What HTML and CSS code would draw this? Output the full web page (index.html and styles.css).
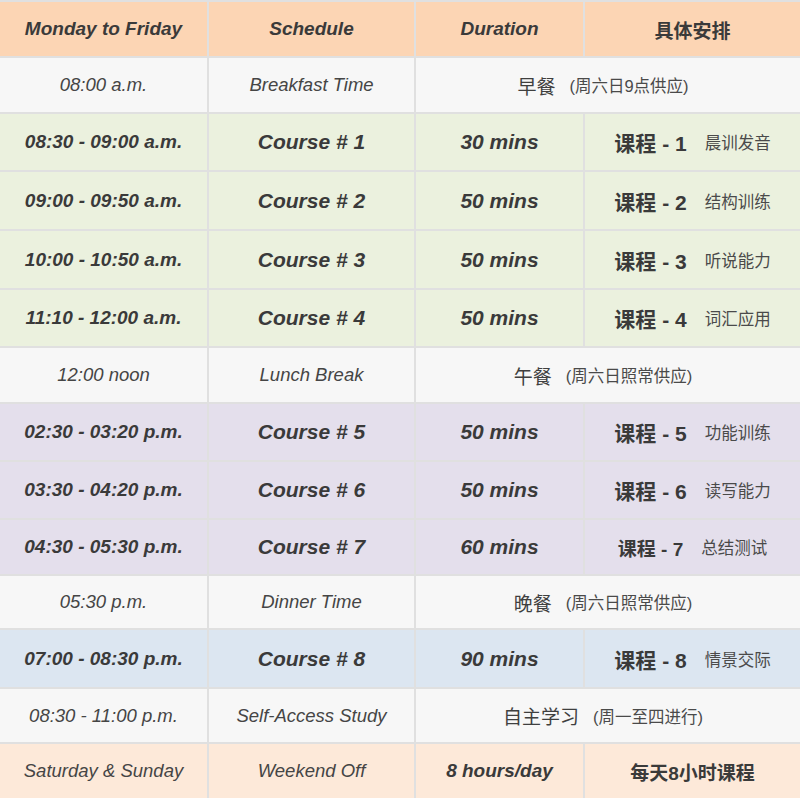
FILE: index.html
```html
<!DOCTYPE html>
<html lang="zh">
<head>
<meta charset="utf-8">
<title>Schedule</title>
<link rel="stylesheet" href="styles.css">
</head>
<body>
<div class="table">
  <div class="row head">
    <div class="c bi">Monday to Friday</div>
    <div class="c bi">Schedule</div>
    <div class="c bi">Duration</div>
    <div class="c cn-b">具体安排</div>
  </div>
  <div class="row meal">
    <div class="c i">08:00 a.m.</div>
    <div class="c i">Breakfast Time</div>
    <div class="c span cn"><span class="cn-main">早餐</span><span class="cn-note">(周六日9点供应)</span></div>
  </div>
  <div class="row green">
    <div class="c time">08:30 - 09:00 a.m.</div>
    <div class="c course">Course # 1</div>
    <div class="c course">30 mins</div>
    <div class="c cn"><span class="cn-course">课程 - 1</span><span class="cn-small">晨训发音</span></div>
  </div>
  <div class="row green">
    <div class="c time">09:00 - 09:50 a.m.</div>
    <div class="c course">Course # 2</div>
    <div class="c course">50 mins</div>
    <div class="c cn"><span class="cn-course">课程 - 2</span><span class="cn-small">结构训练</span></div>
  </div>
  <div class="row green">
    <div class="c time">10:00 - 10:50 a.m.</div>
    <div class="c course">Course # 3</div>
    <div class="c course">50 mins</div>
    <div class="c cn"><span class="cn-course">课程 - 3</span><span class="cn-small">听说能力</span></div>
  </div>
  <div class="row green">
    <div class="c time">11:10 - 12:00 a.m.</div>
    <div class="c course">Course # 4</div>
    <div class="c course">50 mins</div>
    <div class="c cn"><span class="cn-course">课程 - 4</span><span class="cn-small">词汇应用</span></div>
  </div>
  <div class="row meal">
    <div class="c i">12:00 noon</div>
    <div class="c i">Lunch Break</div>
    <div class="c span cn"><span class="cn-main">午餐</span><span class="cn-note">(周六日照常供应)</span></div>
  </div>
  <div class="row purple">
    <div class="c time">02:30 - 03:20 p.m.</div>
    <div class="c course">Course # 5</div>
    <div class="c course">50 mins</div>
    <div class="c cn"><span class="cn-course">课程 - 5</span><span class="cn-small">功能训练</span></div>
  </div>
  <div class="row purple">
    <div class="c time">03:30 - 04:20 p.m.</div>
    <div class="c course">Course # 6</div>
    <div class="c course">50 mins</div>
    <div class="c cn"><span class="cn-course">课程 - 6</span><span class="cn-small">读写能力</span></div>
  </div>
  <div class="row purple">
    <div class="c time">04:30 - 05:30 p.m.</div>
    <div class="c course">Course # 7</div>
    <div class="c course">60 mins</div>
    <div class="c cn"><span class="cn-course light">课程 - 7</span><span class="cn-small">总结测试</span></div>
  </div>
  <div class="row meal">
    <div class="c i">05:30 p.m.</div>
    <div class="c i">Dinner Time</div>
    <div class="c span cn"><span class="cn-main">晚餐</span><span class="cn-note">(周六日照常供应)</span></div>
  </div>
  <div class="row blue">
    <div class="c time">07:00 - 08:30 p.m.</div>
    <div class="c course">Course # 8</div>
    <div class="c course">90 mins</div>
    <div class="c cn"><span class="cn-course">课程 - 8</span><span class="cn-small">情景交际</span></div>
  </div>
  <div class="row meal">
    <div class="c i">08:30 - 11:00 p.m.</div>
    <div class="c i">Self-Access Study</div>
    <div class="c span cn"><span class="cn-main">自主学习</span><span class="cn-note">(周一至四进行)</span></div>
  </div>
  <div class="row weekend">
    <div class="c i">Saturday &amp; Sunday</div>
    <div class="c i">Weekend Off</div>
    <div class="c bi small">8 hours/day</div>
    <div class="c cn-b">每天8小时课程</div>
  </div>
</div>
</body>
</html>
```

FILE: styles.css
```css
html, body {
  margin: 0;
  padding: 0;
  background: #ffffff;
}

.table {
  width: 800px;
  height: 798px;
  box-sizing: border-box;
  padding-top: 2px;
  background: #e0e0e0;
  display: grid;
  grid-template-columns: 207px 205px 167px 215px;
  grid-template-rows: 54px 54px 56px 57px 57px 56px 54px 56px 56px 54px 52px 57px 53px 54px;
  column-gap: 2px;
  row-gap: 2px;
  font-family: "Liberation Sans", Arial, "Noto Sans CJK SC", sans-serif;
  color: #3a3a3a;
}

.row {
  display: contents;
}

.c {
  display: flex;
  align-items: center;
  justify-content: center;
  white-space: nowrap;
  overflow: hidden;
}

.span {
  grid-column: span 2;
  box-sizing: border-box;
  padding-right: 10px;
}

.head .c { background: #fcd5b4; }
.meal .c { background: #f7f7f7; }
.green .c { background: #ebf1de; }
.purple .c { background: #e4dfec; }
.blue .c { background: #dce6f1; }
.weekend .c { background: #fde9d9; }

.bi {
  font-weight: bold;
  font-style: italic;
  font-size: 19px;
}

.i {
  font-style: italic;
  font-size: 18.5px;
  color: #454545;
}

.time {
  font-weight: bold;
  font-style: italic;
  font-size: 19px;
}

.course {
  font-weight: bold;
  font-style: italic;
  font-size: 21px;
}

.small {
  font-size: 19px;
}

.cn-b {
  font-family: "Liberation Sans", "Noto Sans CJK SC", sans-serif;
  font-weight: bold;
  font-size: 19px;
}

.cn {
  font-family: "Liberation Sans", "Noto Sans CJK SC", sans-serif;
}

.cn-main {
  font-size: 19px;
  color: #3f3f3f;
  margin-right: 14px;
}

.cn-note {
  font-size: 16.5px;
  color: #4a4a4a;
}

.cn-course {
  font-size: 21px;
  font-weight: bold;
  margin-right: 18px;
}

.cn-course.light {
  font-size: 19px;
  font-weight: 600;
}

.cn-small {
  font-size: 16.5px;
  color: #4a4a4a;
}
```
